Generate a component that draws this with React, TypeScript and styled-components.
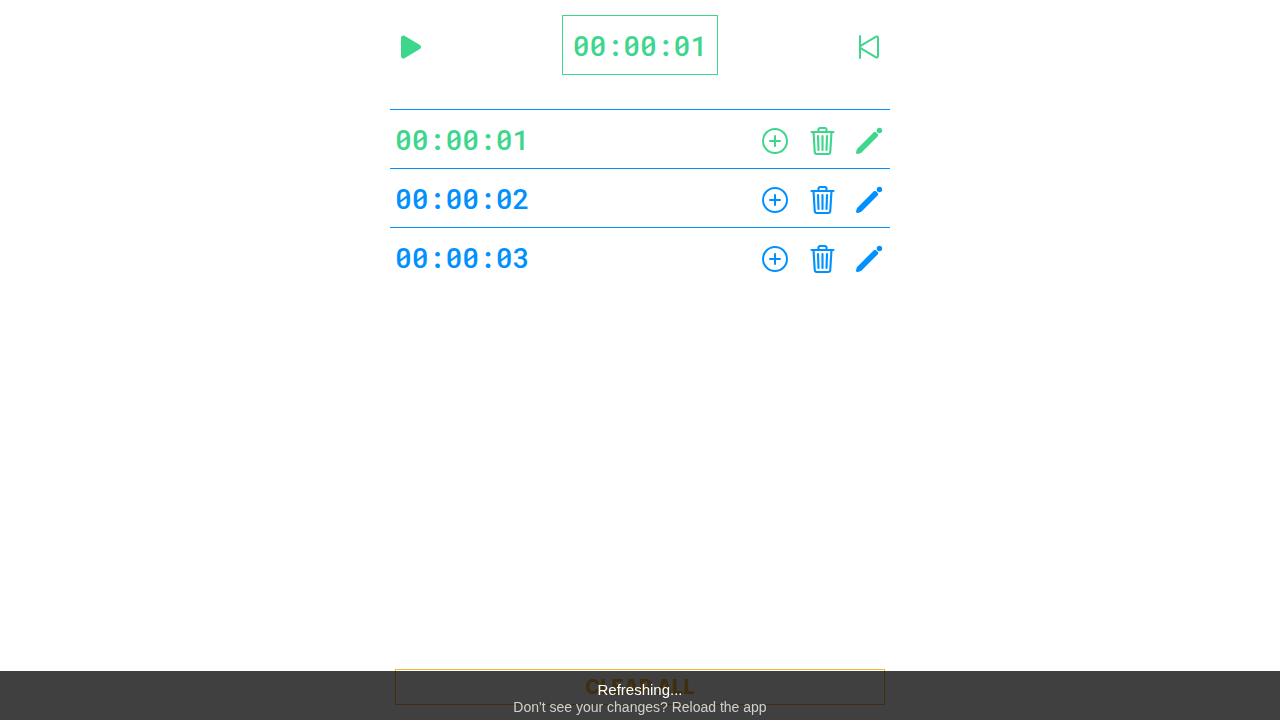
import React from "react";
import styled, { createGlobalStyle } from "styled-components";
import {
  IoPlay,
  IoPlaySkipBackOutline,
  IoAddCircleOutline,
} from "react-icons/io5";

const GREEN = "#3dd68c";
const BLUE = "#0091ff";
const AMBER = "#f5b83d";

const GlobalStyle = createGlobalStyle`
  *, *::before, *::after { box-sizing: border-box; }
  body {
    margin: 0;
    background: #fff;
    font-family: "Liberation Sans", Arial, sans-serif;
  }
`;

const Page = styled.main`
  display: flex;
  flex-direction: column;
  width: 100%;
  max-width: 500px;
  min-height: 100vh;
  margin: 0 auto;
`;

const Header = styled.header`
  display: flex;
  align-items: flex-start;
  justify-content: space-between;
  padding: 15px 5px 34px;
  color: ${GREEN};
`;

const IconButton = styled.button`
  display: flex;
  margin: 0;
  padding: 0;
  border: 0;
  background: none;
  color: inherit;
  font-size: 32px;
  cursor: pointer;
`;

const HeaderButton = styled(IconButton)`
  padding: 16px 0 12px;
`;

const Digits = styled.span`
  font-family: "Roboto Mono", "Liberation Mono", monospace;
  font-size: 28px;
  font-weight: 500;
  line-height: 30px;
`;

const Display = styled.div`
  display: flex;
  align-items: center;
  height: 60px;
  padding: 2px 10px 0;
  border: 1px solid ${GREEN};
`;

const List = styled.ul`
  flex: 1;
  margin: 0;
  padding: 0;
  list-style: none;
`;

const Row = styled.li<{ $active?: boolean }>`
  display: flex;
  align-items: flex-start;
  justify-content: space-between;
  padding: 15px 5px 11px;
  border-top: 1px solid ${BLUE};
  color: ${(p) => (p.$active ? GREEN : BLUE)};
`;

const Actions = styled.div`
  display: flex;
  gap: 15px;
`;

const Footer = styled.footer`
  display: flex;
  padding: 15px 5px;
`;

const ClearButton = styled.button`
  flex: 1;
  height: 36px;
  padding: 0;
  border: 1px solid ${AMBER};
  background: none;
  color: ${AMBER};
  font-family: Inter, sans-serif;
  font-size: 20px;
  font-weight: 800;
  line-height: 24px;
  text-transform: uppercase;
  cursor: pointer;
`;

const Toast = styled.div`
  position: fixed;
  right: 0;
  bottom: 0;
  left: 0;
  padding: 10px 0 4px;
  background: rgba(0, 0, 0, 0.75);
  color: #fff;
  text-align: center;
`;

const ToastTitle = styled.p`
  margin: 0;
  font-size: 15px;
  line-height: 18px;
`;

const ToastHint = styled.p`
  margin: 0;
  color: #d0d0d0;
  font-size: 14px;
  line-height: 17px;
`;

const Glyph = styled.svg`
  width: 32px;
  height: 32px;
  stroke: currentColor;
  stroke-linecap: round;
  stroke-linejoin: round;
`;

function TrashIcon() {
  return (
    <Glyph viewBox="-8 0 512 512" fill="none" strokeWidth="34" aria-hidden="true">
      <path d="m112 112 20 320c.95 18.49 14.4 32 32 32h184c17.67 0 30.87-13.51 32-32l20-320" />
      <path d="M80 112h352" />
      <path d="M192 112V72a23.93 23.93 0 0 1 24-24h80a23.93 23.93 0 0 1 24 24v40" />
      <path d="M256 176v224M184 176l8 224M328 176l-8 224" />
    </Glyph>
  );
}

function PencilIcon() {
  return (
    <Glyph viewBox="0 0 512 512" fill="currentColor" aria-hidden="true">
      <path
        strokeWidth="48"
        d="M350 132 86 396 72 440 116 426 380 162z"
      />
      <circle cx="423" cy="88" r="43" stroke="none" />
    </Glyph>
  );
}

const timers = [
  { time: "00:00:01", active: true },
  { time: "00:00:02", active: false },
  { time: "00:00:03", active: false },
];

export default function App() {
  return (
    <>
      <GlobalStyle />
      <Page>
        <Header>
          <HeaderButton aria-label="Start">
            <IoPlay />
          </HeaderButton>
          <Display>
            <Digits>00:00:01</Digits>
          </Display>
          <HeaderButton aria-label="Reset">
            <IoPlaySkipBackOutline />
          </HeaderButton>
        </Header>
        <List>
          {timers.map(({ time, active }) => (
            <Row key={time} $active={active}>
              <Digits>{time}</Digits>
              <Actions>
                <IconButton aria-label="Add">
                  <IoAddCircleOutline />
                </IconButton>
                <IconButton aria-label="Delete">
                  <TrashIcon />
                </IconButton>
                <IconButton aria-label="Edit">
                  <PencilIcon />
                </IconButton>
              </Actions>
            </Row>
          ))}
        </List>
        <Footer>
          <ClearButton>Clear all</ClearButton>
        </Footer>
      </Page>
      <Toast role="status">
        <ToastTitle>Refreshing...</ToastTitle>
        <ToastHint>Don't see your changes? Reload the app</ToastHint>
      </Toast>
    </>
  );
}
